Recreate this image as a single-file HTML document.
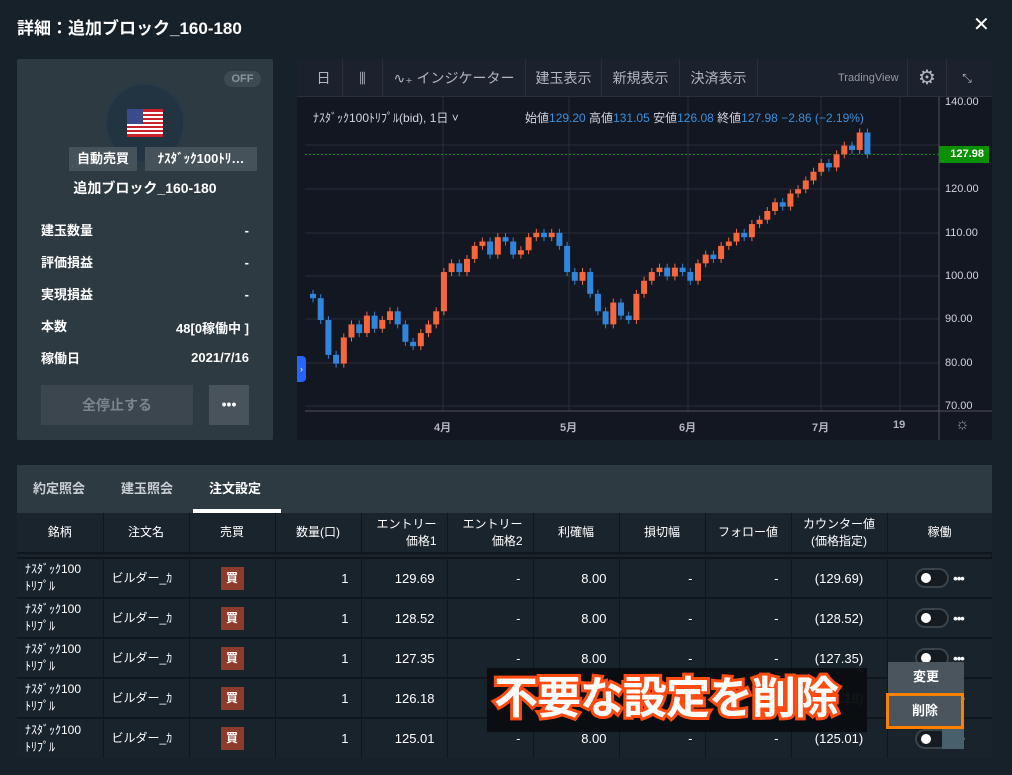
<!DOCTYPE html>
<html><head><meta charset="utf-8"><style>
*{margin:0;padding:0;box-sizing:border-box}
body{width:1012px;height:775px;background:#17212a;font-family:"Liberation Sans","Noto Sans CJK JP",sans-serif;color:#fff;position:relative;overflow:hidden}
.abs{position:absolute}
.title{left:17px;top:14px;font-size:17px;font-weight:bold}
.card{left:17px;top:59px;width:256px;height:381px;background:#2e3a42;border-radius:2px}
.off{left:224px;top:71px;width:37px;height:16px;border-radius:8px;background:#3e4a52;color:#8a949b;font-size:11px;font-weight:bold;text-align:center;line-height:16px}
.circ{left:105px;top:83px;width:80px;height:80px;border-radius:50%;background:#223341;border:2px solid #263a48}
.tag{top:147px;height:24px;background:#46525a;font-size:13px;font-weight:bold;line-height:24px;text-align:center}
.lbl{left:41px;font-size:13px;font-weight:bold}
.val{right:763px;font-size:13px;font-weight:bold;text-align:right}
.chart{left:297px;top:59px;width:695px;height:381px;background:#131722}
.tb{left:297px;top:59px;width:695px;height:38px;background:#1b222d;border-bottom:1px solid #2a2f3a}
.tbi{top:59px;height:38px;line-height:38px;font-size:14px;color:#b2b5be;text-align:center;border-right:1px solid #2a2f3a}
.tabs{left:17px;top:465px;width:975px;height:48px;background:#2e3a42}
.tab{top:465px;height:48px;line-height:48px;font-size:13px;font-weight:bold;color:#c9ced2}
table{position:absolute;left:17px;top:513px;width:975px;border-collapse:collapse;font-size:12px}
th{height:40px;font-weight:normal;border-right:1px solid #0f171d;border-bottom:2px solid #0f171d;background:#1a242c;line-height:17px}
td{height:40px;border-right:1px solid #0f171d;border-top:2px solid #0f171d;background:#19232b;text-align:right;padding-right:12px;font-size:13px}
td.l{text-align:left;padding-left:8px;font-size:12px;line-height:17px}
td.c{text-align:center;padding:0}
.buy{display:inline-block;width:23px;height:23px;background:#8c3b2c;line-height:23px;font-size:12px;font-weight:bold;text-align:center}
.tg{display:inline-block;width:34px;height:20px;border:2px solid #3a434a;border-radius:10px;vertical-align:middle;position:relative;background:#141c22}
.tg:after{content:"";position:absolute;left:4px;top:3px;width:10px;height:10px;border-radius:50%;background:#fff}
.dots{display:inline-block;vertical-align:middle;margin-left:4px;font-weight:bold;font-size:13px;letter-spacing:-1px}
.ax{left:945px;font-size:11px;color:#d1d4dc}
</style></head><body>
<div class="abs title">詳細：追加ブロック_160-180</div>
<div class="abs" style="left:973px;top:12px;font-size:20px">✕</div>

<div class="abs card"></div>
<div class="abs off">OFF</div>
<div class="abs circ"></div>
<svg class="abs" style="left:127px;top:109px" width="36" height="28" viewBox="0 0 36 28"><rect width="36" height="28" fill="#fff"/><g fill="#c8202c"><rect y="0" width="36" height="3"/><rect y="5" width="36" height="2"/><rect y="9" width="36" height="2"/><rect y="13" width="36" height="2"/><rect y="17" width="36" height="2"/><rect y="21" width="36" height="2"/><rect y="25" width="36" height="3"/></g><rect width="16" height="15" fill="#3b4a8c"/></svg>
<div class="abs tag" style="left:69px;width:68px">自動売買</div>
<div class="abs tag" style="left:145px;width:112px">ﾅｽﾀﾞｯｸ100ﾄﾘ…</div>
<div class="abs" style="left:17px;width:256px;top:178px;text-align:center;font-size:14px;font-weight:bold">追加ブロック_160-180</div>
<div class="abs lbl" style="top:220px">建玉数量</div><div class="abs val" style="top:223px">-</div>
<div class="abs lbl" style="top:252px">評価損益</div><div class="abs val" style="top:255px">-</div>
<div class="abs lbl" style="top:284px">実現損益</div><div class="abs val" style="top:287px">-</div>
<div class="abs lbl" style="top:316px">本数</div><div class="abs val" style="top:318px">48[0稼働中 ]</div>
<div class="abs lbl" style="top:348px">稼働日</div><div class="abs val" style="top:350px">2021/7/16</div>
<div class="abs" style="left:41px;top:385px;width:152px;height:40px;background:#3b464e;color:#7b858c;font-size:14px;font-weight:bold;text-align:center;line-height:40px">全停止する</div>
<div class="abs" style="left:209px;top:385px;width:40px;height:40px;background:#48535b;text-align:center;line-height:38px;font-weight:bold;font-size:14px">•••</div>

<div class="abs chart"></div>
<div class="abs tb"></div>
<div class="abs tbi" style="left:305px;width:38px">日</div>
<div class="abs tbi" style="left:343px;width:40px">⫼</div>
<div class="abs tbi" style="left:383px;width:143px">∿₊ インジケーター</div>
<div class="abs tbi" style="left:526px;width:76px">建玉表示</div>
<div class="abs tbi" style="left:602px;width:78px">新規表示</div>
<div class="abs tbi" style="left:680px;width:78px">決済表示</div>
<div class="abs" style="left:838px;top:72px;font-size:11px;color:#9598a1">TradingView</div>
<div class="abs tbi" style="left:907px;width:40px;border-left:1px solid #2a2f3a;font-size:20px">⚙</div>
<div class="abs tbi" style="left:947px;width:40px;border:none;font-size:12px">⤡</div>
<svg class="abs" style="left:297px;top:97px" width="695" height="343" id="cs"></svg>
<div class="abs" style="left:313px;top:109px;font-size:12px;color:#d1d4dc">ﾅｽﾀﾞｯｸ100ﾄﾘﾌﾟﾙ(bid), 1日 ˅</div>
<div class="abs" style="left:525px;top:109px;font-size:12px;color:#d1d4dc">始値<span style="color:#3a8fdc">129.20</span> 高値<span style="color:#3a8fdc">131.05</span> 安値<span style="color:#3a8fdc">126.08</span> 終値<span style="color:#3a8fdc">127.98 −2.86 (−2.19%)</span></div>
<div class="abs ax" style="top:96px">140.00</div>
<div class="abs ax" style="top:183px">120.00</div>
<div class="abs ax" style="top:227px">110.00</div>
<div class="abs ax" style="top:270px">100.00</div>
<div class="abs ax" style="top:313px">90.00</div>
<div class="abs ax" style="top:357px">80.00</div>
<div class="abs ax" style="top:400px">70.00</div>
<div class="abs" style="left:939px;top:146px;width:50px;height:17px;background:#089000;font-size:11px;font-weight:bold;line-height:17px;text-align:right;padding-right:5px">127.98</div>
<div class="abs" style="left:434px;top:419px;font-size:11px;font-weight:bold;color:#b2b5be">4月</div>
<div class="abs" style="left:560px;top:419px;font-size:11px;font-weight:bold;color:#b2b5be">5月</div>
<div class="abs" style="left:679px;top:419px;font-size:11px;font-weight:bold;color:#b2b5be">6月</div>
<div class="abs" style="left:812px;top:419px;font-size:11px;font-weight:bold;color:#b2b5be">7月</div>
<div class="abs" style="left:893px;top:419px;font-size:11px;font-weight:bold;color:#b2b5be">19</div>
<div class="abs" style="left:955px;top:416px;font-size:16px;color:#9598a1">☼</div>
<div class="abs" style="left:297px;top:356px;width:9px;height:26px;background:#2962ff;border-radius:0 4px 4px 0;font-size:9px;text-align:center;line-height:26px">›</div>

<div class="abs tabs"></div>
<div class="abs tab" style="left:33px">約定照会</div>
<div class="abs tab" style="left:121px">建玉照会</div>
<div class="abs tab" style="left:209px;color:#fff">注文設定</div>
<div class="abs" style="left:193px;top:509px;width:88px;height:4px;background:#fff"></div>
<table>
<tr><th style="width:86px">銘柄</th><th style="width:86px">注文名</th><th style="width:86px">売買</th><th style="width:86px">数量(口)</th><th style="width:86px;text-align:right;padding-right:10px">エントリー<br>価格1</th><th style="width:86px;text-align:right;padding-right:10px">エントリー<br>価格2</th><th style="width:86px">利確幅</th><th style="width:86px">損切幅</th><th style="width:86px">フォロー値</th><th style="width:96px">カウンター値<br>(価格指定)</th><th style="border-right:none">稼働</th></tr>
<tr style="height:5px"><td colspan="11" style="height:5px;padding:0"></td></tr>
<tr><td class="l">ﾅｽﾀﾞｯｸ100<br>ﾄﾘﾌﾟﾙ</td><td class="l">ビルダー_ｶ</td><td class="c"><span class="buy">買</span></td><td>1</td><td>129.69</td><td>-</td><td>8.00</td><td>-</td><td>-</td><td class="c">(129.69)</td><td class="c" style="border-right:none"><span class="tg"></span><span class="dots">•••</span></td></tr>
<tr><td class="l">ﾅｽﾀﾞｯｸ100<br>ﾄﾘﾌﾟﾙ</td><td class="l">ビルダー_ｶ</td><td class="c"><span class="buy">買</span></td><td>1</td><td>128.52</td><td>-</td><td>8.00</td><td>-</td><td>-</td><td class="c">(128.52)</td><td class="c" style="border-right:none"><span class="tg"></span><span class="dots">•••</span></td></tr>
<tr><td class="l">ﾅｽﾀﾞｯｸ100<br>ﾄﾘﾌﾟﾙ</td><td class="l">ビルダー_ｶ</td><td class="c"><span class="buy">買</span></td><td>1</td><td>127.35</td><td>-</td><td>8.00</td><td>-</td><td>-</td><td class="c">(127.35)</td><td class="c" style="border-right:none"><span class="tg"></span><span class="dots">•••</span></td></tr>
<tr><td class="l">ﾅｽﾀﾞｯｸ100<br>ﾄﾘﾌﾟﾙ</td><td class="l">ビルダー_ｶ</td><td class="c"><span class="buy">買</span></td><td>1</td><td>126.18</td><td>-</td><td>8.00</td><td>-</td><td>-</td><td class="c">(126.18)</td><td class="c" style="border-right:none"><span class="tg"></span><span class="dots">•••</span></td></tr>
<tr><td class="l">ﾅｽﾀﾞｯｸ100<br>ﾄﾘﾌﾟﾙ</td><td class="l">ビルダー_ｶ</td><td class="c"><span class="buy">買</span></td><td>1</td><td>125.01</td><td>-</td><td>8.00</td><td>-</td><td>-</td><td class="c">(125.01)</td><td class="c" style="border-right:none"><span class="tg"></span><span class="dots">•••</span></td></tr>
</table>

<div class="abs" style="left:487px;top:668px;width:380px;height:64px;background:#0a0d10;opacity:.95"></div>
<div class="abs" style="left:494px;top:669px;font-size:44px;font-weight:bold;color:#fff;line-height:60px;letter-spacing:-1px;-webkit-text-stroke:6px #ff4a10;paint-order:stroke fill">不要な設定を削除</div>
<div class="abs" style="left:888px;top:662px;width:76px;height:32px;background:#4a555e;font-size:13px;font-weight:bold;text-align:center;line-height:30px">変更</div>
<div class="abs" style="left:886px;top:693px;width:78px;height:36px;background:#4a555e;border:3px solid #ff8000;font-size:13px;font-weight:bold;text-align:center;line-height:30px">削除</div>
<div class="abs" style="left:942px;top:729px;width:22px;height:20px;background:#48606c"></div>

<script>
var s=document.getElementById('cs'),h='';
function Y(p){return 102+(140-p)*4.36-97}
[145,189,233,276,319,363,406].forEach(function(y){h+='<line x1="8" x2="642" y1="'+(y-97)+'" y2="'+(y-97)+'" stroke="#2a2e39"/>'});
[443,569,688,821,900].forEach(function(x){h+='<line x1="'+(x-297)+'" x2="'+(x-297)+'" y1="0" y2="314" stroke="#2a2e39"/>'});
h+='<line x1="642" x2="642" y1="0" y2="343" stroke="#50535e"/><line x1="8" x2="695" y1="314" y2="314" stroke="#50535e"/>';
h+='<line x1="8" x2="642" y1="'+Y(127.98)+'" y2="'+Y(127.98)+'" stroke="#089000" stroke-dasharray="2,2"/>';
var P=[96,95,90,82,80,86,89,87,91,88,90,92,89,85,84,87,89,92,101,103,101,104,107,108,105,109,108,105,106,109,110,109,110,107,101,99,101,96,92,89,94,91,90,96,99,101,102,100,102,101,99,103,105,104,107,108,110,109,112,113,115,117,116,119,120,122,124,126,125,128,130,129,133,128];
for(var i=1;i<P.length;i++){var x=310+(i-1)*7.7-297,o=P[i-1],c=P[i],up=c>o,col=up?'#f7673b':'#2f86dc';
var t=Y(Math.max(o,c)),b=Y(Math.min(o,c));if(b-t<2)b=t+2;
h+='<line x1="'+(x+3)+'" x2="'+(x+3)+'" y1="'+(t-4)+'" y2="'+(b+4)+'" stroke="'+col+'"/><rect x="'+x+'" y="'+t+'" width="6" height="'+(b-t)+'" fill="'+col+'"/>';}
s.innerHTML=h;
</script>
</body></html>
